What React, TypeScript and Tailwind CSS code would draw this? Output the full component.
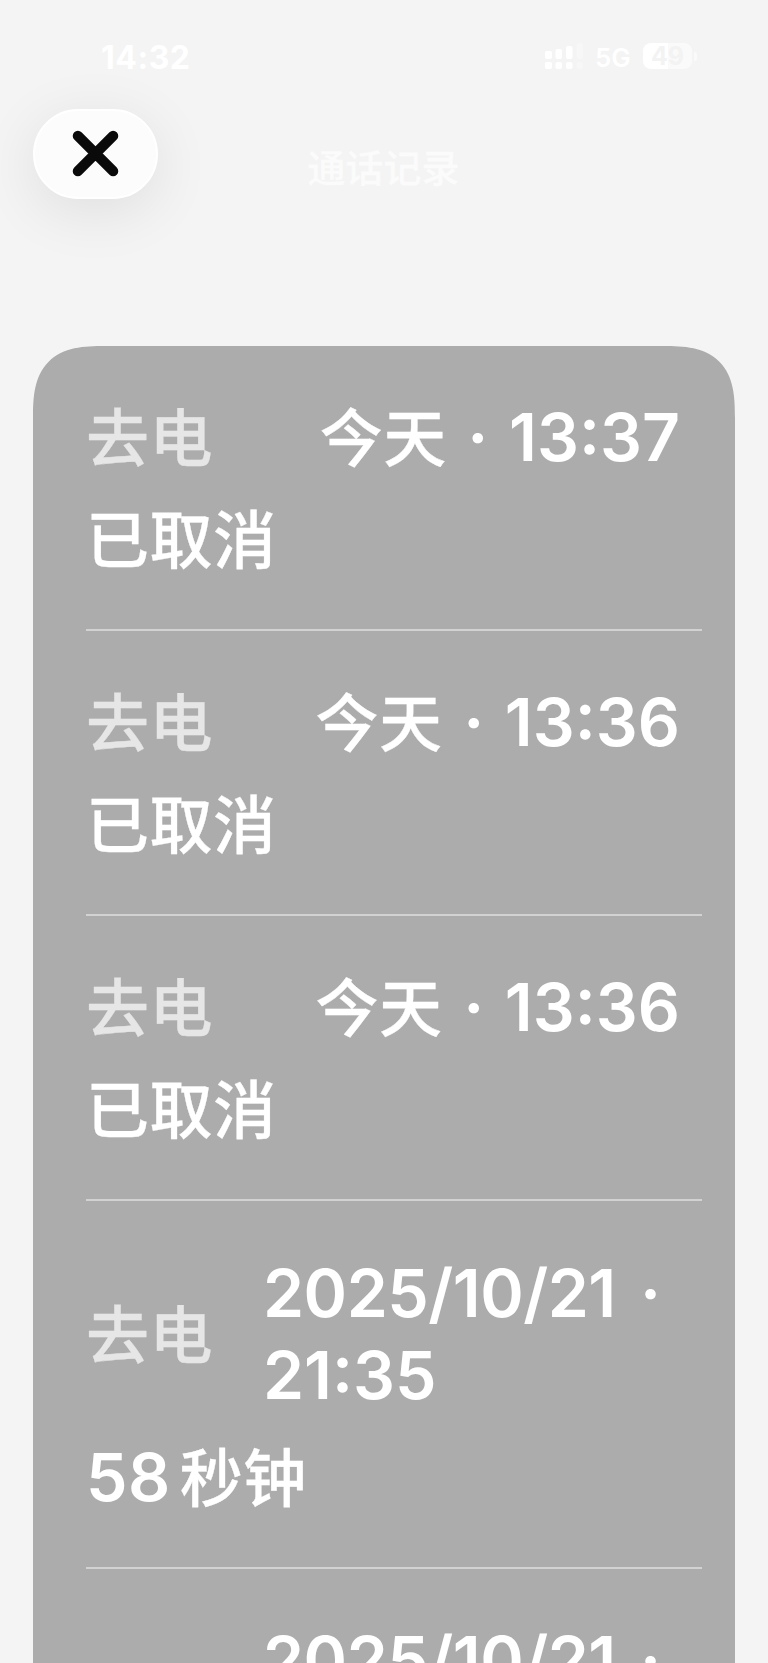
import { clsx } from 'clsx';

type Call = {
  kind: string;
  day: string;
  time: string;
  amount?: string;
  status: string;
  wrap?: boolean;
};

const calls: Call[] = [
  { kind: '去电', day: '今天', time: '13:37', status: '已取消' },
  { kind: '去电', day: '今天', time: '13:36', status: '已取消' },
  { kind: '去电', day: '今天', time: '13:36', status: '已取消' },
  { kind: '去电', day: '2025/10/21', time: '21:35', amount: '58', status: '秒钟', wrap: true },
  { kind: '去电', day: '2025/10/21', time: '21:34', amount: '12', status: '秒钟', wrap: true },
];

// Chinese runs sit on the Latin baseline, so they must not grow the line box
const cjk = "font-['Noto_Sans_CJK_SC',sans-serif] text-[63px] leading-none font-medium tracking-[0.5px] [-webkit-text-stroke:0.3px]";

function StatusBar() {
  return (
    <div className="flex h-[108.5px] shrink-0 items-start justify-between pl-[101px] pr-[71px] text-white">
      <span className="mt-[39px] text-[32px] leading-[37px] font-bold tracking-[0.5px]">14:32</span>
      <div className="mt-[43px] flex h-[26px] items-center">
        <svg width="39" height="26" viewBox="0 0 39 26" fill="currentColor">
          <rect x="0" y="8" width="7" height="8" rx="2" />
          <rect x="10.5" y="6" width="6.5" height="10" rx="2" />
          <rect x="21" y="3" width="6.5" height="13" rx="2" />
          <rect x="0" y="19" width="7" height="7" rx="2" />
          <rect x="10.5" y="19" width="6.5" height="7" rx="2" />
          <rect x="21" y="19" width="6.5" height="7" rx="2" />
          <rect x="31.5" y="0" width="6.5" height="16" rx="2" opacity=".25" />
          <rect x="31.5" y="19" width="6.5" height="7" rx="2" opacity=".25" />
        </svg>
        <span className="ml-[11px] w-[48px] pt-[4px] text-[26px] leading-none font-semibold">5G</span>
        <div className="flex h-[26px] w-[49px] items-center justify-center rounded-[8px] bg-linear-to-r from-white from-51% to-[#fafafa] to-51%">
          <span className="text-[25px] leading-none font-bold text-[#f3f3f3]">49</span>
        </div>
        <span className="ml-[2px] h-[9px] w-[3px] rounded-r-full bg-[#fafafa]" />
      </div>
    </div>
  );
}

function Header() {
  return (
    <div className="grid h-[237px] shrink-0 grid-cols-[1fr_auto_1fr] items-start px-[33px]">
      <button className="flex h-[90px] w-[125px] items-center justify-center rounded-full border-2 border-white bg-[#fcfcfc] shadow-[0_12px_60px_rgba(0,0,0,0.09)]">
        <svg width="47" height="47" viewBox="0 0 48 48" fill="none" stroke="#0a0a0a" strokeWidth="10.5" strokeLinecap="round" className="-ml-px">
          <path d="M6 6 42 42M42 6 6 42" />
        </svg>
      </button>
      <h1 className="-ml-px mt-[29px] font-['Noto_Sans_CJK_SC',sans-serif] text-[38px] leading-[56px] font-medium text-[#fbfbfb] [-webkit-text-stroke:0.3px]">通话记录</h1>
    </div>
  );
}

function CallRow({ call, last }: { call: Call; last: boolean }) {
  return (
    <li className="relative ml-[53px] mr-[33px] flex flex-col gap-[19.2px] py-[50.5px] leading-[82.5px]">
      <div className="flex items-center justify-between">
        <div className="h-[82.5px] text-[#e6e6e6]">
          <span className={cjk}>{call.kind}</span>
        </div>
        <div className={call.wrap ? 'w-[439px]' : 'flex pr-[22px]'}>
          <div className={clsx('h-[82.5px] whitespace-pre', call.wrap ? 'tracking-[-0.5px] [word-spacing:8px]' : '[word-spacing:4px]')}>
            {call.wrap ? call.day : <span className={cjk}>{call.day}</span>}
            {' · '}
          </div>
          <div className="h-[82.5px]">{call.time}</div>
        </div>
      </div>
      <div className="h-[82.5px]">
        {call.amount && <span className="mr-[9px] tracking-[0.5px]">{call.amount}</span>}
        <span className={cjk}>{call.status}</span>
      </div>
      {!last && <div className="absolute inset-x-0 bottom-0 h-[2px] bg-[#d2d2d2]" />}
    </li>
  );
}

export default function App() {
  return (
    <main className="flex h-[1663px] w-[768px] flex-col overflow-hidden bg-[#f4f4f4] font-['Inter','Noto_Sans_CJK_SC',sans-serif]">
      <StatusBar />
      <Header />
      <ul className="mx-[33px] flex-1 rounded-t-[53px] bg-[#acacac] text-[66px] font-[570] text-white supports-[corner-shape:squircle]:rounded-t-[72px] [corner-shape:superellipse(1.5)]">
        {calls.map((call, i) => (
          <CallRow key={i} call={call} last={i === calls.length - 1} />
        ))}
      </ul>
    </main>
  );
}
